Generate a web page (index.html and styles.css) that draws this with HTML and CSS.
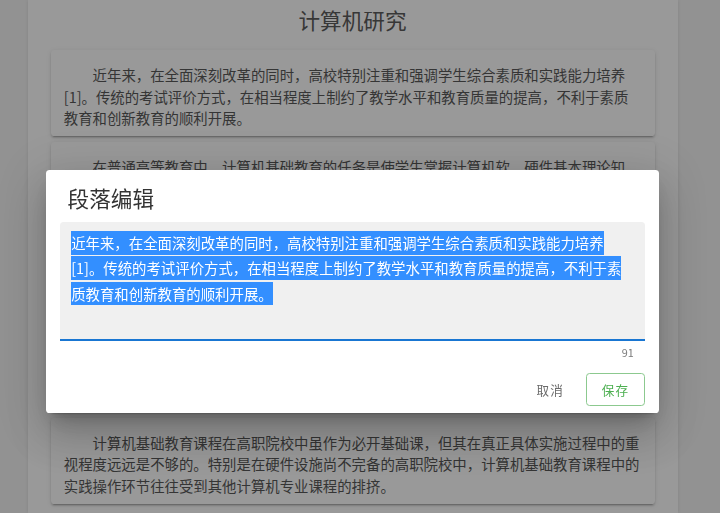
FILE: index.html
```html
<!DOCTYPE html>
<html lang="zh-CN">
<head>
<meta charset="utf-8">
<title>计算机研究</title>
<link rel="stylesheet" href="styles.css">
</head>
<body>
<div class="viewport">
  <main class="container">
    <h1 class="page-title">计算机研究</h1>
    <section class="card"><p class="para">近年来，在全面深刻改革的同时，高校特别注重和强调学生综合素质和实践能力培养[1]。传统的考试评价方式，在相当程度上制约了教学水平和教育质量的提高，不利于素质教育和创新教育的顺利开展。</p></section>
    <section class="card"><p class="para">在普通高等教育中，计算机基础教育的任务是使学生掌握计算机软、硬件基本理论知识，培养学生利用计算机解决实际问题的能力，为后续专业课程的学习打下坚实的基础，同时也为学生今后走向工作岗位提供必要的技能保障。</p></section>
    <section class="card"><p class="para">然而，在传统的教学模式下，计算机基础课程的考核方式较为单一，往往以期末笔试成绩作为主要评价依据，忽视了对学生实际操作能力和创新思维的考查，难以全面反映学生的真实学习水平。</p></section>
    <section class="card"><p class="para">因此，改革计算机基础课程的考试评价方式，建立科学合理的多元化评价体系，对于提高教学质量、培养学生的综合素质和实践能力具有十分重要的现实意义，也是当前高职院校教学改革中亟待解决的问题。</p></section>
    <section class="card"><p class="para">计算机基础教育课程在高职院校中虽作为必开基础课，但其在真正具体实施过程中的重视程度远远是不够的。特别是在硬件设施尚不完备的高职院校中，计算机基础教育课程中的实践操作环节往往受到其他计算机专业课程的排挤。</p></section>
  </main>
</div>

<div class="overlay">
  <div class="dialog" role="dialog" aria-label="段落编辑">
    <div class="dialog-title">段落编辑</div>
    <div class="dialog-body">
      <div class="field">
        <div class="field-input"><span class="selected">近年来，在全面深刻改革的同时，高校特别注重和强调学生综合素质和实践能力培养[1]。传统的考试评价方式，在相当程度上制约了教学水平和教育质量的提高，不利于素质教育和创新教育的顺利开展。</span></div>
      </div>
      <div class="field-details"><span class="counter">91</span></div>
    </div>
    <div class="dialog-actions">
      <button class="btn btn-text" type="button">取消</button>
      <button class="btn btn-outlined" type="button">保存</button>
    </div>
  </div>
</div>
</body>
</html>
```

FILE: styles.css
```css
* { box-sizing: border-box; }

html, body {
  margin: 0;
  padding: 0;
  height: 100%;
  overflow: hidden;
}

body {
  background: #f3f3f3;
  font-family: "Noto Sans CJK SC", "Noto Sans", sans-serif;
  color: #424242;
}

.viewport {
  width: 705px;
  height: 100%;
}

.container {
  width: 650px;
  min-height: 100%;
  margin: 0 auto;
  padding: 4px 23px 0;
  background: #ffffff;
  box-shadow: 0 0 4px rgba(0, 0, 0, 0.12);
}

.page-title {
  margin: 0 0 14px;
  font-size: 21.6px;
  line-height: 32px;
  font-weight: 400;
  text-align: center;
  color: #4a4a4a;
}

.card {
  background: #ffffff;
  border-radius: 3.6px;
  padding: 14px 13.3px 7.2px;
  margin-bottom: 6px;
  box-shadow: 0 3px 1px -2px rgba(0,0,0,.2), 0 2px 2px 0 rgba(0,0,0,.14), 0 1px 5px 0 rgba(0,0,0,.12);
}

.para {
  margin: 0;
  font-size: 14.4px;
  line-height: 21.6px;
  text-indent: 2em;
  color: #474747;
}

/* dialog */
.overlay {
  position: fixed;
  inset: 0;
  background: rgba(33, 33, 33, 0.46);
  display: flex;
  justify-content: center;
  align-items: flex-start;
  padding: 170px 15px 0 0;
}

.dialog {
  width: 613px;
  background: #ffffff;
  border-radius: 3.6px;
  box-shadow: 0 11px 15px -7px rgba(0,0,0,.2), 0 24px 38px 3px rgba(0,0,0,.14), 0 9px 46px 8px rgba(0,0,0,.12);
}

.dialog-title {
  padding: 14.4px 21.6px 9px;
  font-size: 21.6px;
  line-height: 28.8px;
  font-weight: 400;
  color: #333333;
}

.dialog-body {
  padding: 0 14.4px;
}

.field {
  background: #f0f0f0;
  border-radius: 3.6px 3.6px 0 0;
  border-bottom: 2px solid #1976d2;
  padding: 8.4px 12px 7.8px 10.8px;
}

.field-input {
  height: 100.8px;
  font-size: 14.4px;
  line-height: 25.2px;
  color: #212121;
}

.selected {
  background: #338fff;
  color: #ffffff;
  padding: 1.3px 0;
}

.field-details {
  display: flex;
  justify-content: flex-end;
  padding: 0 10.8px;
  margin: 5px 0 7.2px;
}

.counter {
  font-size: 10.8px;
  line-height: 12.6px;
  color: #7a7a7a;
}

.dialog-actions {
  display: flex;
  justify-content: flex-end;
  gap: 7.2px;
  padding: 7.2px 14.4px;
}

.btn {
  height: 32.4px;
  min-width: 57.6px;
  padding: 0 14.4px;
  border-radius: 3.6px;
  font-family: "Noto Sans CJK SC", "Noto Sans", sans-serif;
  font-size: 12.6px;
  font-weight: 400;
  letter-spacing: 1.1px;
  background: transparent;
  cursor: pointer;
}

.btn-text {
  border: 1px solid transparent;
  color: #6b6b6b;
}

.btn-outlined {
  border: 1px solid #8cc98f;
  color: #4caf50;
}
```
